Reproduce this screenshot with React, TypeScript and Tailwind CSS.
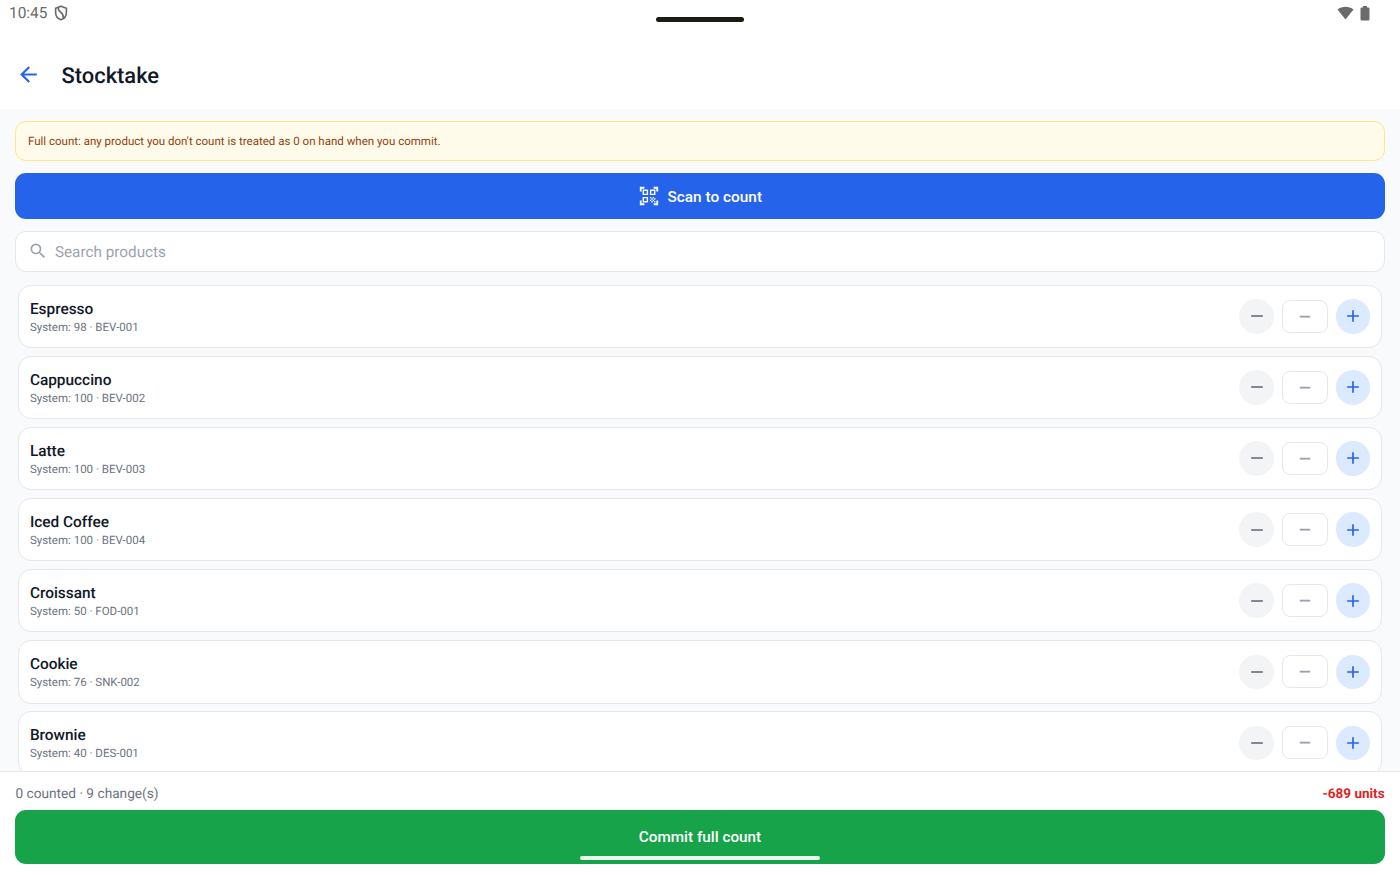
import { MdAdd, MdArrowBack, MdQrCodeScanner, MdRemove, MdSearch } from "react-icons/md";

const products = [
  { name: "Espresso", stock: 98, sku: "BEV-001" },
  { name: "Cappuccino", stock: 100, sku: "BEV-002" },
  { name: "Latte", stock: 100, sku: "BEV-003" },
  { name: "Iced Coffee", stock: 100, sku: "BEV-004" },
  { name: "Croissant", stock: 50, sku: "FOD-001" },
  { name: "Cookie", stock: 76, sku: "SNK-002" },
  { name: "Brownie", stock: 40, sku: "DES-001" },
];

const StatusBar = () => {
  return (
    <div className="relative flex h-[26px] shrink-0 items-center justify-between pl-[9px] pr-[30px] text-[#6b6b6b]">
      <div className="flex items-center gap-[6.5px]">
        <span className="pt-px text-[15.4px] leading-[25px]">10:45</span>
        <svg width="14" height="16" viewBox="0 0 14 16" fill="none" stroke="currentColor" strokeWidth="1.6">
          <path d="M7 1.2 12.4 3.2V7.4C12.4 10.8 10.2 13.6 7 14.8 3.8 13.6 1.6 10.8 1.6 7.4V3.2Z" />
          <path d="M4.4 2.4C3 7.4 10.4 7 9.4 13.2" />
        </svg>
      </div>
      <div className="flex items-center gap-[6px]">
        <svg width="17" height="14" viewBox="0 0 17 14" fill="currentColor">
          <path d="M.5 3.6C5 -.2 12 -.2 16.5 3.6L8.5 13.6Z" />
        </svg>
        <svg width="10" height="15" viewBox="0 0 10 15" fill="currentColor">
          <path d="M3 0h4v1.5h1.3q1.2 0 1.2 1.2v10.6q0 1.2-1.2 1.2H1.7q-1.2 0-1.2-1.2V2.7q0-1.2 1.2-1.2H3z" />
        </svg>
      </div>
      <div className="absolute left-[656px] top-[17px] h-[5px] w-[88px] rounded-full bg-[#1b1c14]" />
    </div>
  );
};

const ProductRow = ({ name, stock, sku }: { name: string; stock: number; sku: string }) => {
  return (
    <div className="flex h-[63.6px] shrink-0 items-center justify-between rounded-[13px] border border-[#e5e7eb] bg-white pl-[11.3px] pr-[11px]">
      <div className="pt-[2px]">
        <p className="pt-[0.6px] text-[15.4px] leading-[20px] font-medium text-[#111827]">{name}</p>
        <p className="text-[11.5px] leading-[17.4px] text-[#6b7280]">
          System: {stock} · {sku}
        </p>
      </div>
      <div className="flex items-center gap-[8px]">
        <button className="flex size-[34.5px] items-center justify-center rounded-full bg-[#f3f4f6] text-[#6b7280]">
          <MdRemove size={20} />
        </button>
        <div className="flex h-[33px] w-[46px] items-center justify-center rounded-[8px] border border-[#e5e7eb] pt-[2px] text-[15.3px] font-bold text-[#9ca3af]">
          —
        </div>
        <button className="flex size-[34.5px] items-center justify-center rounded-full bg-[#dbeafe] text-[#2563eb]">
          <MdAdd size={20} />
        </button>
      </div>
    </div>
  );
};

export default function App() {
  return (
    <div className="flex h-[875px] w-[1400px] flex-col overflow-hidden bg-white font-['Roboto',sans-serif] [text-rendering:geometricPrecision]">
      <StatusBar />

      <header className="flex h-[83px] shrink-0 items-center gap-[20.5px] pl-[16px] pt-[16px]">
        <MdArrowBack size={25} className="-mt-[2px] text-[#2563eb]" />
        <h1 className="pt-[2px] text-[21.9px] leading-[28px] font-medium text-[#111827]">Stocktake</h1>
      </header>

      <main className="flex min-h-0 flex-1 flex-col overflow-hidden bg-[#f9fafb] px-[15.4px] pt-[12px]">
        <div className="flex h-[40px] shrink-0 items-center rounded-[11px] border border-[#fde68a] bg-[#fffbeb] px-[11.5px] pt-px text-[11.53px] text-[#92400e]">
          Full count: any product you don't count is treated as 0 on hand when you commit.
        </div>

        <button className="mt-[12px] flex h-[45.5px] shrink-0 items-center justify-center gap-[7.5px] rounded-[11px] bg-[#2563eb] text-[15.4px] font-medium text-white">
          <MdQrCodeScanner size={22} />
          <span className="pt-[3px]">Scan to count</span>
        </button>

        <div className="mt-[12px] flex h-[41.5px] shrink-0 items-center gap-[7.2px] rounded-[11px] border border-[#e5e7eb] bg-white px-[11.3px] text-[15.3px] text-[#9ca3af]">
          <MdSearch size={20} className="-mt-px" />
          <span className="pt-[2.5px]">Search products</span>
        </div>

        <div className="mt-[12.5px] flex flex-col gap-[7.5px] px-[2.2px]">
          {products.map((product) => (
            <ProductRow key={product.sku} {...product} />
          ))}
        </div>
      </main>

      <footer className="relative h-[104.5px] shrink-0 border-t border-[#e5e7eb] bg-white px-[15.4px] pt-[11px]">
        <div className="flex items-center justify-between pt-px text-[13.7px] leading-[20px]">
          <span className="text-[#6b7280]">0 counted · 9 change(s)</span>
          <span className="text-[13.5px] font-bold text-[#dc2626]">-689 units</span>
        </div>
        <button className="mt-[6.5px] flex h-[53.5px] w-full items-center justify-center rounded-[11px] bg-[#16a34a] pt-px text-[15.3px] font-medium text-white">
          Commit full count
        </button>
        <div className="absolute left-[580px] top-[84px] h-[4.5px] w-[240px] rounded-full bg-white/90" />
      </footer>
    </div>
  );
}
